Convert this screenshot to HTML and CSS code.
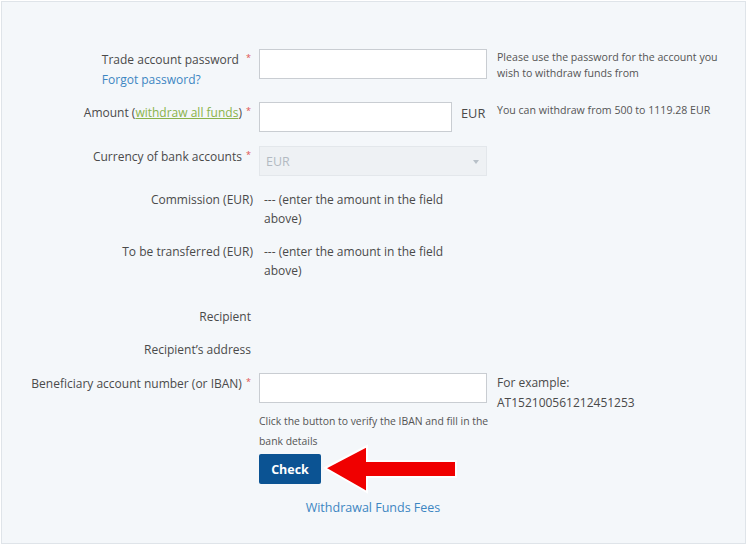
FILE: index.html
```html
<!DOCTYPE html>
<html lang="en">
<head>
<meta charset="utf-8">
<title>Withdraw funds</title>
<link rel="stylesheet" href="styles.css">
</head>
<body>
<div class="panel">
  <form class="form">
    <div class="row r1">
      <div class="label">
        <div class="label-block">Trade account password <span class="req wide">*</span><br><a class="link-blue" href="#">Forgot password?</a></div>
      </div>
      <div class="ctrl"><input class="field" type="password"></div>
      <div class="hint">Please use the password for the account you wish to withdraw funds from</div>
    </div>

    <div class="row r2">
      <div class="label pad1">Amount (<a class="link-green" href="#">withdraw all funds</a>) <span class="req">*</span></div>
      <div class="ctrl amount"><input class="field short" type="text"><span class="cur">EUR</span></div>
      <div class="hint">You can withdraw from 500 to 1119.28 EUR</div>
    </div>

    <div class="row r3">
      <div class="label pad1">Currency of bank accounts <span class="req">*</span></div>
      <div class="ctrl"><div class="select"><span>EUR</span><span class="caret"></span></div></div>
      <div class="hint"></div>
    </div>

    <div class="row r4">
      <div class="label plain">Commission (EUR)</div>
      <div class="ctrl"><div class="value">--- (enter the amount in the field above)</div></div>
      <div class="hint"></div>
    </div>

    <div class="row r5">
      <div class="label plain">To be transferred (EUR)</div>
      <div class="ctrl"><div class="value">--- (enter the amount in the field above)</div></div>
      <div class="hint"></div>
    </div>

    <div class="row r6">
      <div class="label">Recipient</div>
      <div class="ctrl"></div>
      <div class="hint"></div>
    </div>

    <div class="row r7">
      <div class="label">Recipient’s address</div>
      <div class="ctrl"></div>
      <div class="hint"></div>
    </div>

    <div class="row r8">
      <div class="label pad1">Beneficiary account number (or IBAN) <span class="req">*</span></div>
      <div class="ctrl">
        <input class="field" type="text">
        <div class="note">Click the button to verify the IBAN and fill in the bank details</div>
        <div class="check-wrap">
          <button class="btn-check" type="button">Check</button>
          <svg class="arrow" width="140" height="52" viewBox="0 0 140 52" aria-hidden="true">
            <polygon points="4,25 46,3 46,18 135,18 135,34 46,34 46,49" fill="#f00000" stroke="#ffffff" stroke-width="2" stroke-linejoin="miter"/>
          </svg>
        </div>
        <div class="fees"><a class="link-blue" href="#">Withdrawal Funds Fees</a></div>
      </div>
      <div class="hint big">For example:<br>AT152100561212451253</div>
    </div>
  </form>
</div>
</body>
</html>
```

FILE: styles.css
```css
html, body {
  margin: 0;
  padding: 0;
  background: #ffffff;
}

body {
  font-family: "Open Sans", "Noto Sans", sans-serif;
  color: #4d4d4d;
}

.panel {
  margin: 1px 1px 2px 1px;
  height: 541px;
  border: 1px solid #dfe4e9;
  background: #f4f7fa;
}

.form {
  margin: 0;
  padding-top: 47px;
  display: flex;
  flex-direction: column;
}

.row {
  display: grid;
  grid-template-columns: 257px 238px 1fr;
  align-items: start;
}

.r2 { margin-top: 13px; }
.r3, .r4, .r5, .r7, .r8 { margin-top: 14px; }
.r6 { margin-top: 27px; }

.label {
  font-size: 12px;
  line-height: 19px;
  text-align: right;
  padding-right: 8px;
  color: #4a4a4a;
}

.label.plain { padding-right: 6px; }

.r1 .label, .pad1 { padding-top: 1px; }

.label-block {
  display: inline-block;
  text-align: left;
}

.req {
  color: #e0524d;
  font-size: 9px;
  position: relative;
  top: -3px;
  margin-left: 1px;
}

.req.wide { margin-left: 4px; }

.link-blue {
  color: #3d86c2;
  text-decoration: none;
}

.link-green {
  color: #8ab34a;
  text-decoration: underline;
}

.ctrl {
  padding-right: 10px;
}

.field {
  display: block;
  box-sizing: border-box;
  width: 228px;
  height: 30px;
  margin: 0;
  border: 1px solid #c9cdd2;
  background: #ffffff;
  border-radius: 0;
  outline: none;
}

.amount {
  display: flex;
  align-items: flex-start;
}

.field.short { width: 193px; }

.cur {
  margin-left: 9px;
  font-size: 12.8px;
  line-height: 19px;
  padding-top: 2px;
  color: #4a4a4a;
}

.select {
  box-sizing: border-box;
  width: 228px;
  height: 30px;
  border: 1px solid #e3e7eb;
  background: #eef1f4;
  display: flex;
  align-items: center;
  justify-content: space-between;
  padding: 0 7px 0 6px;
  font-size: 12.5px;
  color: #b3bac2;
}

.caret {
  width: 0;
  height: 0;
  border-left: 3px solid transparent;
  border-right: 3px solid transparent;
  border-top: 4px solid #b8c0c8;
  margin-top: 1px;
}

.value {
  font-size: 12px;
  line-height: 19px;
  padding-left: 5px;
  width: 190px;
  color: #4a4a4a;
}

.hint {
  font-size: 10.6px;
  line-height: 16px;
  color: #555555;
  max-width: 228px;
}

.r1 .hint { padding-top: 0; }

.hint.big {
  font-size: 12px;
  line-height: 20px;
  color: #4a4a4a;
}

.note {
  margin-top: 8px;
  width: 232px;
  font-size: 10.4px;
  line-height: 20px;
  color: #555555;
}

.check-wrap {
  position: relative;
  margin-top: 3px;
  height: 30px;
}

.btn-check {
  display: block;
  width: 62px;
  height: 30px;
  margin: 0;
  padding: 0;
  border: none;
  border-radius: 2px;
  background: #0b5393;
  color: #ffffff;
  font-family: "Open Sans", "Noto Sans", sans-serif;
  font-weight: 700;
  font-size: 12.5px;
}

.arrow {
  position: absolute;
  left: 62px;
  top: -11px;
}

.fees {
  margin-top: 14px;
  width: 228px;
  text-align: center;
  font-size: 12.5px;
  line-height: 19px;
}
```
